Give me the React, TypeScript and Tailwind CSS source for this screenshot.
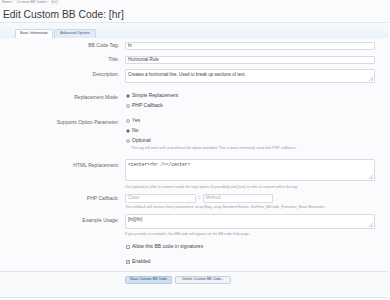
import React from 'react';

const font = { fontFamily: '"Liberation Sans", Arial, sans-serif' };

const Label: React.FC<{ text: string; className?: string }> = ({ text, className = '' }) => (
    <div className={`w-[119px] shrink-0 text-right text-[5px] text-[#666] ${className}`}>{text}</div>
);

const Grip = () => (
    <svg className="absolute right-[1px] bottom-[1px]" width="4" height="4" viewBox="0 0 4 4">
        <path d="M4 0L0 4M4 2L2 4" stroke="#9aa3ad" strokeWidth="0.6" />
    </svg>
);

const Radio: React.FC<{ checked?: boolean; text: string }> = ({ checked, text }) => (
    <div className="flex h-[10px] items-center gap-[2px] text-[5px] text-[#444]">
        <span className="flex h-[4px] w-[4px] items-center justify-center rounded-full border-[0.5px] border-[#a3a9b0] bg-[#f4f4f4]">
            {checked && <span className="h-[2px] w-[2px] rounded-full bg-[#444]" />}
        </span>
        {text}
    </div>
);

const Check: React.FC<{ checked?: boolean; text: string }> = ({ checked, text }) => (
    <div className="flex h-[10px] items-center gap-[2px] text-[5px] text-[#444]">
        <span className="flex h-[4px] w-[4px] items-center justify-center border-[0.5px] border-[#a3a9b0] bg-[#f4f4f4]">
            {checked && (
                <svg width="4" height="4" viewBox="0 0 4 4">
                    <path d="M0.6 2L1.6 3.1L3.5 0.7" stroke="#333" strokeWidth="0.8" fill="none" />
                </svg>
            )}
        </span>
        {text}
    </div>
);

const Hint: React.FC<{ text: string; className?: string }> = ({ text, className = '' }) => (
    <div className={`ml-[125px] flex h-[6px] items-center text-[3.6px] text-[#999] ${className}`}>{text}</div>
);

export default function App() {
    return (
        <div className="h-[300px] w-[390px] overflow-hidden bg-[#fbfbfd]" style={font}>
            <div className="flex h-[6px] items-center gap-[3px] pl-[2px] text-[3.6px] text-[#888]">
                <span>Home ›</span>
                <span>Custom BB Codes ›</span>
                <span>[hr] ›</span>
            </div>
            <h1 className="mt-[3px] pl-[3px] text-[10.3px] leading-[12px] text-[#3a3a3a]">Edit Custom BB Code: [hr]</h1>

            <div className="mt-[1px] flex h-[16px] w-[388px] items-end border-t border-[#e3e8ef] bg-gradient-to-b from-[#f8fafd] to-[#ebf2f8] pl-[15px]">
                <div className="flex h-[9px] w-[38px] items-center justify-center rounded-t-[2px] border-[0.5px] border-b-0 border-[#cfd9e4] bg-[#fdfeff] text-[3.6px] text-[#444]">
                    Basic Information
                </div>
                <div className="ml-[1px] flex h-[9px] w-[42px] items-center justify-center rounded-t-[2px] border-[0.5px] border-b-0 border-[#cfd9e4] bg-[#e2ecf6] text-[3.6px] text-[#3d5a7a]">
                    Advanced Options
                </div>
            </div>

            <div className="mt-[4px] flex h-[8px] items-center">
                <Label text="BB Code Tag:" />
                <div className="ml-[6px] flex h-[8px] w-[250px] items-center rounded-[1px] border-[0.5px] border-[#d6dce4] bg-white pl-[2px] text-[4.5px] text-[#444]">hr</div>
            </div>
            <div className="mt-[6px] flex h-[8px] items-center">
                <Label text="Title:" />
                <div className="ml-[6px] flex h-[8px] w-[250px] items-center rounded-[1px] border-[0.5px] border-[#d6dce4] bg-white pl-[2px] text-[4.5px] text-[#444]">Horizontal Rule</div>
            </div>
            <div className="mt-[5px] flex">
                <Label text="Description:" className="pt-[2px]" />
                <div className="relative ml-[6px] h-[14px] w-[250px] rounded-[1px] border-[0.5px] border-[#d6dce4] bg-white pl-[2px] pt-[2px] text-[4.5px] text-[#444]">
                    Creates a horizontal line. Used to break up sections of text.
                    <Grip />
                </div>
            </div>

            <div className="mt-[8px] flex">
                <Label text="Replacement Mode:" className="pt-[2.5px]" />
                <div className="ml-[7px] flex flex-col">
                    <Radio checked text="Simple Replacement" />
                    <Radio text="PHP Callback" />
                </div>
            </div>
            <div className="mt-[5px] flex">
                <Label text="Supports Option Parameter:" className="pt-[2.5px]" />
                <div className="ml-[7px] flex flex-col">
                    <Radio text="Yes" />
                    <Radio checked text="No" />
                    <Radio text="Optional" />
                </div>
            </div>
            <div className="ml-[131px] flex h-[6px] items-center text-[3.6px] text-[#999]">
                This tag will work with and without the option provided. This is most commonly used with PHP callbacks.
            </div>

            <div className="mt-[7px] flex">
                <Label text="HTML Replacement:" className="pt-[3px]" />
                <div className="relative ml-[6px] h-[22px] w-[250px] rounded-[1px] border-[0.5px] border-[#d6dce4] bg-white pl-[2px] pt-[2px] text-[4.5px] text-[#444]" style={{ fontFamily: '"Liberation Mono", monospace' }}>
                    {'<center><hr /></center>'}
                    <Grip />
                </div>
            </div>
            <Hint className="mt-[4px]" text="Use {option} to refer to content inside the tag's option (if provided) and {text} to refer to content within the tag." />

            <div className="mt-[3px] flex h-[9px] items-center">
                <Label text="PHP Callback:" />
                <div className="ml-[6px] flex h-[9px] w-[71px] items-center rounded-[1px] border-[0.5px] border-[#d6dce4] bg-white pl-[2px] text-[4.5px] text-[#b0b0b0]">Class</div>
                <span className="mx-[2px] text-[4.5px] text-[#555]">::</span>
                <div className="flex h-[9px] w-[70px] items-center rounded-[1px] border-[0.5px] border-[#d6dce4] bg-white pl-[2px] text-[4.5px] text-[#b0b0b0]">Method</div>
            </div>
            <Hint className="mt-[2px]" text="This callback will receive these parameters: array $tag, array $rendererStates, XenForo_BbCode_Formatter_Base $formatter." />

            <div className="mt-[3px] flex">
                <Label text="Example Usage:" className="pt-[3px]" />
                <div className="relative ml-[6px] h-[15px] w-[250px] rounded-[1px] border-[0.5px] border-[#d6dce4] bg-white pl-[2px] pt-[2px] text-[4.5px] text-[#444]">
                    [hr][/hr]
                    <Grip />
                </div>
            </div>
            <Hint className="mt-[3px]" text="If you provide an example, this BB code will appear on the BB code help page." />

            <div className="ml-[126px] mt-[4px]">
                <Check text="Allow this BB code in signatures" />
            </div>
            <div className="ml-[126px] mt-[5px]">
                <Check checked text="Enabled" />
            </div>

            <div className="mt-[4px] h-[27px] w-[388px] border-y-[0.5px] border-[#e1e6ed] bg-[#f9fafc] pl-[125px] pt-[4px]">
                <div className="flex gap-[3px]">
                    <div className="flex h-[8px] w-[47px] items-center justify-center rounded-[1.5px] border-[0.5px] border-[#b5c9dd] bg-[#cfe0f0] text-[3.6px] text-[#2d4a68]">
                        Save Custom BB Code
                    </div>
                    <div className="flex h-[8px] w-[56px] items-center justify-center rounded-[1.5px] border-[0.5px] border-[#c8d3df] bg-[#eef2f7] text-[3.6px] text-[#3a4d62]">
                        Delete Custom BB Code...
                    </div>
                </div>
            </div>
        </div>
    );
}
